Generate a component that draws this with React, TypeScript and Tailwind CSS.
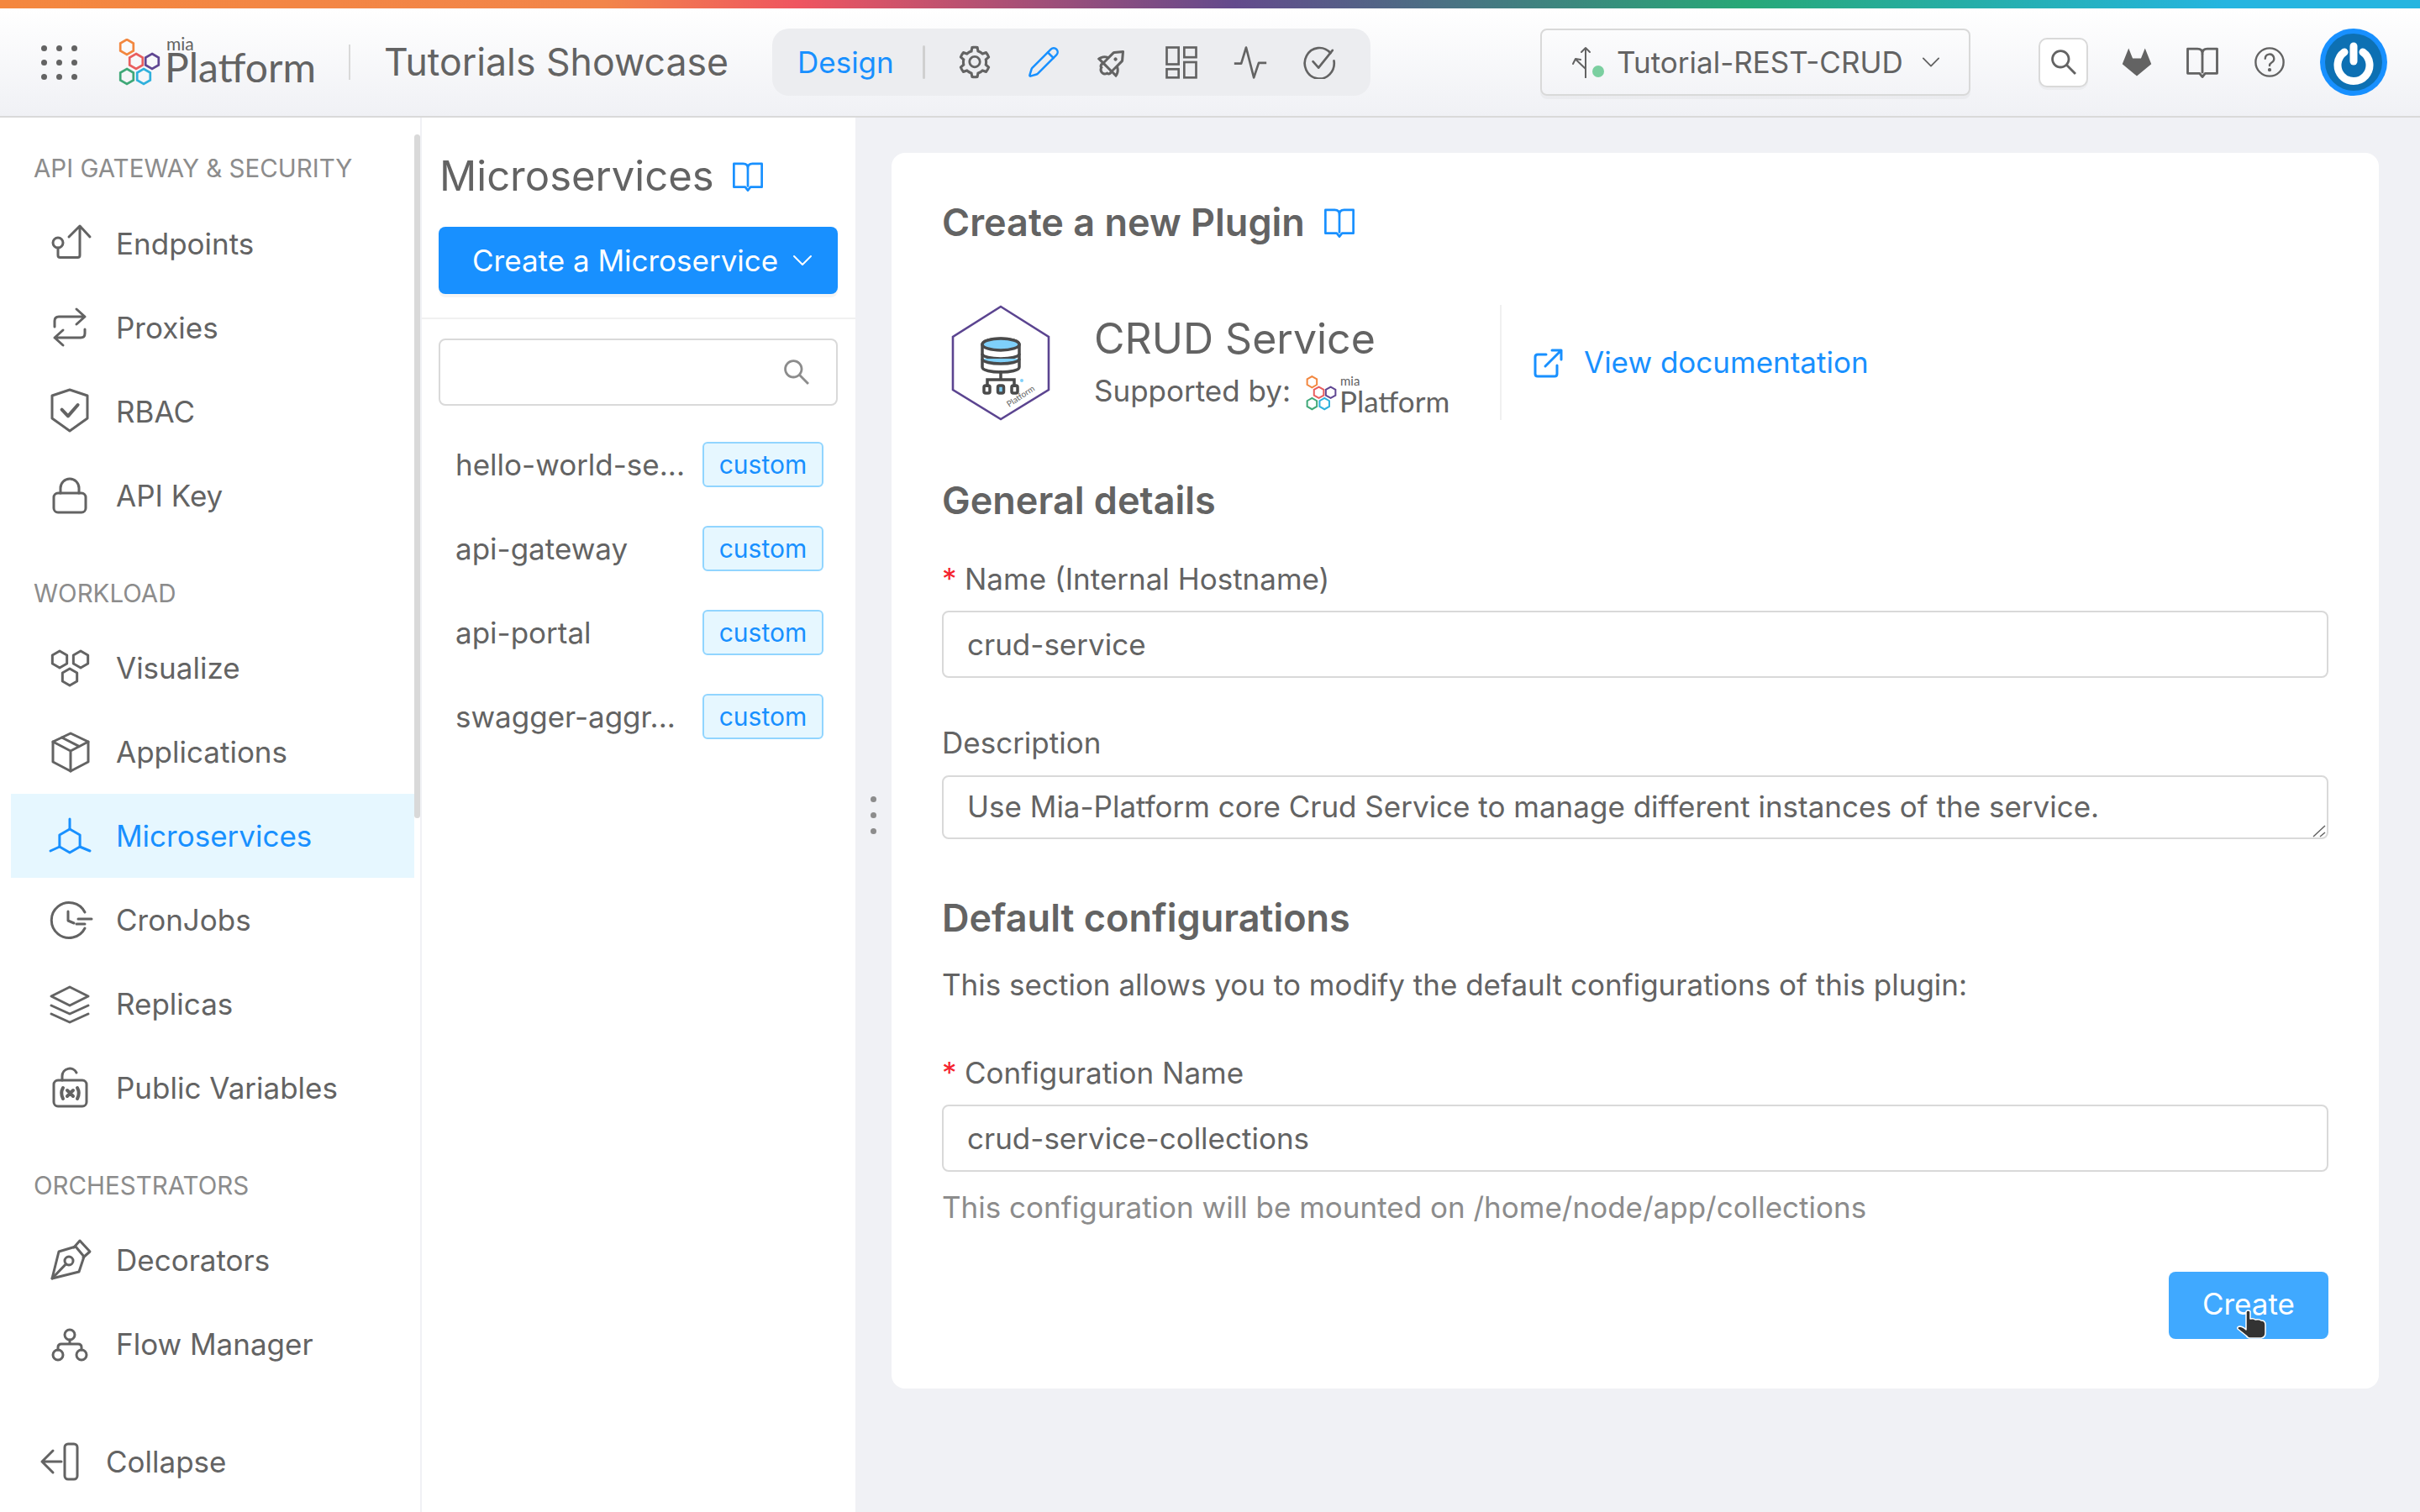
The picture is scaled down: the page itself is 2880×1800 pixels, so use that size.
import React from 'react';
import { Pencil } from 'lucide-react';
import { AiOutlineRocket, AiOutlineSearch, AiOutlineSetting } from 'react-icons/ai';

type IconProps = { className?: string };

const hex = (cx: number, cy: number, r: number) => {
    const w = r * 0.866;
    return `M${cx} ${cy - r}L${cx + w} ${cy - r / 2}V${cy + r / 2}L${cx} ${cy + r}L${cx - w} ${cy + r / 2}V${cy - r / 2}Z`;
};

const Line = ({ className, children }: IconProps & { children: React.ReactNode }) => (
    <svg
        viewBox="0 0 24 24"
        fill="none"
        stroke="currentColor"
        strokeWidth={1.5}
        strokeLinecap="round"
        strokeLinejoin="round"
        className={className ?? 'w-12 h-12'}
        overflow="visible"
    >
        {children}
    </svg>
);

const Chevron = ({ className }: IconProps) => (
    <svg viewBox="0 0 24 16" fill="none" stroke="currentColor" strokeWidth={2} strokeLinecap="round" strokeLinejoin="round" className={className}>
        <path d="M2 3L12 13L22 3" />
    </svg>
);

const EndpointsIcon = () => (
    <Line>
        <circle cx="4.5" cy="11.5" r="3" />
        <path d="M4.5 14.5v4.5q0 1.3 1.3 1.3h10.4q1.3 0 1.3-1.3V1.5M11 8l6.5-6.5L23.5 8" />
    </Line>
);
const ProxiesIcon = () => (
    <Line>
        <path d="M2.5 11.5V8q0-2.500 2.500-2.500h15.500M15.500 1l5 4.500-5 4.500" />
        <path d="M20.500 13v2.500q0 2.500-2.500 2.500H2.500M7.500 13.500l-5 4.500 5 4.500" />
    </Line>
);
const RbacIcon = () => (
    <Line>
        <path d="M11.500-1L22 2.500V16L11.500 23.500L1 16V2.500Z" />
        <path d="M6.800 10.800l3.700 3.900 5.800-6.700" strokeWidth={2} />
    </Line>
);
const LockIcon = () => (
    <Line>
        <rect x="2" y="10.500" width="19" height="11.500" rx="2.500" />
        <path d="M6 10.500V7.500a5.500 5.500 0 0 1 11 0v3" />
    </Line>
);
const VisualizeIcon = () => (
    <Line>
        <path d={hex(5.5, 7, 5)} />
        <path d={hex(18, 7, 5)} />
        <path d={hex(11.5, 17.5, 5)} />
    </Line>
);
const BoxIcon = () => (
    <Line>
        <path d="M12 1L22.500 6V18L12 23.500L1.500 18V6Z" />
        <path d="M1.500 6L12 11.500L22.500 6M12 11.500V23.500M6.800 3.500L17.200 8.800" />
    </Line>
);
const MicroIcon = () => (
    <Line>
        <path d={hex(11.5, 15, 7)} />
        <path d="M11.500 2V8M0 21L5.500 18.500M23.500 21L17.500 18.500" />
    </Line>
);
const CronIcon = () => (
    <Line>
        <path d="M20.500 7.500A10.500 10.500 0 1 0 20.500 17" />
        <path d="M10.500 7v5.500l3.500 1.500M16.500 11.500h8M15.500 14.500h5" />
    </Line>
);
const ReplicasIcon = () => (
    <Line>
        <path d="M11.500 2L22.500 7.500L11.500 13L0.500 7.500Z" />
        <path d="M0.500 13L11.500 18L22.500 13M0.500 18L11.500 23L22.500 18" />
    </Line>
);
const VariablesIcon = () => (
    <Line>
        <rect x="2" y="7.500" width="19.500" height="15.500" rx="2.500" />
        <path d="M7 7.500V5a4.500 4.500 0 0 1 8.500-2" />
        <path d="M7.500 12q-1.800 3.200 0 6.500M16 12q1.800 3.200 0 6.500M10 13.500l3.500 3.500m0-3.500l-3.500 3.500" strokeWidth={2} />
    </Line>
);
const PenIcon = () => (
    <Line>
        <path d="M1 23L5 7L15 4L20 10L17 19Z" />
        <path d="M14 4.500L17.500 0.500L23.500 7L19.500 10.500" />
        <circle cx="11" cy="12.500" r="2.500" />
        <path d="M1 23L9.300 14.300" />
    </Line>
);
const FlowIcon = () => (
    <Line>
        <circle cx="11.500" cy="6.500" r="3" />
        <circle cx="4.500" cy="18.500" r="3" />
        <circle cx="18.500" cy="18.500" r="3" />
        <path d="M11.500 9.500V12M4.500 15.500V14q0-2 2-2h10q2 0 2 2v1.500" />
    </Line>
);
const CollapseIcon = () => (
    <Line>
        <rect x="14.500" y="1.500" width="7.500" height="21" rx="2" />
        <path d="M12.500 12H1M7.500 5.500L1 12L7.500 18.500" />
    </Line>
);
const BookIcon = ({ className }: IconProps) => (
    <svg viewBox="0 0 24 24" fill="none" stroke="currentColor" strokeWidth={1.700} strokeLinejoin="round" className={className}>
        <path d="M1.500 2.500H8.500Q12 2.500 12 6Q12 2.500 15.500 2.500H22.500V20H14L12 22.500L10 20H1.500Z" />
        <path d="M12 6V20" />
    </svg>
);
const TilesIcon = () => (
    <svg viewBox="0 0 24 24" fill="none" stroke="currentColor" strokeWidth={1.600} className="w-[40px] h-[40px]">
        <rect x="1.500" y="1.500" width="8.500" height="12" />
        <rect x="14" y="1.500" width="8.500" height="7" />
        <rect x="1.500" y="17" width="8.500" height="6" />
        <rect x="14" y="12" width="8.500" height="11" />
    </svg>
);
const PulseIcon = () => (
    <svg viewBox="0 0 24 24" fill="none" stroke="currentColor" strokeWidth={1.600} strokeLinejoin="round" className="w-[40px] h-[40px]">
        <path d="M0.500 13H5.500L9 1.500L14.500 23L18 12.500H23.500" />
    </svg>
);
const CheckCircleIcon = () => (
    <svg viewBox="0 0 24 24" fill="none" stroke="currentColor" strokeWidth={1.600} strokeLinecap="round" strokeLinejoin="round" className="w-[40px] h-[40px]">
        <path d="M20 5.500A10.500 11 0 1 0 22.500 11" />
        <path d="M7.500 11.500l4 4.500 10-12.500" />
    </svg>
);
const BranchIcon = () => (
    <svg viewBox="0 0 30 40" fill="none" stroke="#636363" strokeWidth={2} strokeLinecap="round" strokeLinejoin="round" className="w-[30px] h-[40px]">
        <path d="M18 38V3M13 8l5-5 5 5" />
        <path d="M18 38V28L6.500 17M3 22l3-6 6 1" />
    </svg>
);
const HelpIcon = () => (
    <svg viewBox="0 0 24 24" fill="none" stroke="#636363" strokeWidth={1.500} strokeLinecap="round" className="w-[38px] h-[38px]">
        <circle cx="12" cy="12" r="10.500" />
        <path d="M8.700 9.300a3.300 3.300 0 1 1 4.800 3c-1 .6-1.500 1.200-1.500 2.300" />
        <circle cx="12" cy="17.800" r=".6" fill="#636363" />
    </svg>
);
const GitlabIcon = () => (
    <svg viewBox="0 0 24 24" fill="#636363" className="w-[36px] h-[36px]">
        <path d="M5.500 1L8.700 9H15.300L18.500 1L23.500 13.500L12 23L0.500 13.500Z" />
    </svg>
);
const ExternalIcon = () => (
    <svg viewBox="0 0 36 36" fill="none" stroke="currentColor" strokeWidth={3} strokeLinecap="round" strokeLinejoin="round" className="w-[36px] h-[36px]">
        <path d="M28 21V31Q28 34 25 34H5Q2 34 2 31V11Q2 8 5 8H15" />
        <path d="M14 22L33 3M22 3H33V14" />
    </svg>
);
const HandCursor = ({ className }: IconProps) => (
    <svg viewBox="0 0 36 36" fill="#333333" stroke="#ffffff" strokeWidth={1.500} strokeLinejoin="round" className={className}>
        <path d="M11 3Q11 1 13.500 1Q16 1 16 3V11Q20 10 22 12Q27 11 29 13Q34 13 34 18V28Q34 33 29 34H16Q13 34 11 31L1 23Q0 21 3 20Q7 20 11 24Z" />
    </svg>
);

const Avatar = () => (
    <svg viewBox="0 0 80 80" className="w-20 h-20">
        <circle cx="40" cy="40" r="40" fill="#1890ff" />
        <circle cx="40" cy="40" r="34" fill="#0d70b3" />
        <path d="M29 28A19 19 0 1 0 51 28" fill="none" stroke="#ffffff" strokeWidth="9" strokeLinecap="round" />
        <path d="M40 21V39" stroke="#ffffff" strokeWidth="9" strokeLinecap="round" />
    </svg>
);

const LogoHexes = ({ className }: IconProps) => (
    <svg viewBox="0 0 50 56" fill="none" strokeWidth={2.700} className={className}>
        <path d={hex(10, 10, 9)} stroke="#f2873f" />
        <path d={hex(21, 27, 9)} stroke="#e95e5e" />
        <path d={hex(40, 27, 9)} stroke="#5f4692" />
        <path d={hex(10, 45, 9)} stroke="#3fa878" />
        <path d={hex(30, 45, 9)} stroke="#2fb0dc" />
    </svg>
);

const Logo = ({ big }: { big?: boolean }) =>
    big ? (
        <div className="flex items-end w-[235px] h-[56px]">
            <LogoHexes className="w-[50px] h-[56px] shrink-0" />
            <div className="relative ml-[5px] h-[56px]">
                <span className="absolute left-[2px] top-[-3px] text-[21px] leading-[17px] font-[Lato,sans-serif] text-[#636363]">mia</span>
                <span className="absolute left-0 top-[14px] text-[48px] leading-[39px] font-[Lato,sans-serif] text-[#636363]">Platform</span>
            </div>
        </div>
    ) : (
        <div className="flex items-end w-[170px] h-[46px]">
            <LogoHexes className="w-[37px] h-[42px] shrink-0" />
            <div className="relative ml-[3px] h-[46px]">
                <span className="absolute left-[1px] top-[3px] text-[15px] leading-[15px] font-[Lato,sans-serif] text-[#636363]">mia</span>
                <span className="absolute left-0 top-[18px] text-[35px] leading-[32px] font-[Lato,sans-serif] text-[#636363]">Platform</span>
            </div>
        </div>
    );

const CrudIcon = () => (
    <svg viewBox="0 0 120 138" fill="none" className="w-[120px] h-[138px] ml-[10px] shrink-0">
        <path d="M60 2L117 38V101L60 136L3 101V38Z" stroke="#5b4490" strokeWidth="2.600" />
        <g stroke="#4a4a4a" strokeWidth="3.500">
            <path d="M38 47c0-9 44-9 44 0v27c0 8-44 8-44 0Z" fill="#ffffff" />
            <ellipse cx="60" cy="47" rx="22" ry="7" fill="#7fd0fa" />
            <path d="M38 58c0 8 44 8 44 0" />
            <path d="M38 64c0 8 44 8 44 0" fill="#7fd0fa" />
            <path d="M60 78V89M44 98V89H76V98" />
            <rect x="40" y="96" width="7" height="9" rx="2" />
            <rect x="56.500" y="96" width="7" height="9" rx="2" fill="#7fd0fa" />
            <rect x="73" y="96" width="7" height="9" rx="2" />
        </g>
        <circle cx="85" cy="90" r="2" fill="#7fd0fa" />
        <g transform="translate(70 122) rotate(-34)">
            <text x="0" y="0" fontSize="10" fontFamily="Lato, sans-serif" fill="#636363">Platform</text>
        </g>
    </svg>
);

const NavItem = ({ icon, label, active }: { icon: React.ReactNode; label: string; active?: boolean }) => (
    <div className={`h-[100px] ml-[13px] pl-[47px] flex items-center ${active ? 'bg-[#e6f7ff] text-[#1890ff]' : 'text-[#636363]'}`}>
        <span className="w-[78px] shrink-0">{icon}</span>
        <span>{label}</span>
    </div>
);

const GroupLabel = ({ children, className }: { children: React.ReactNode; className: string }) => (
    <div className={`h-[40px] pl-[40px] text-[29.500px] leading-[40px] text-[#8c8c8c] ${className}`}>{children}</div>
);

const Sidebar = () => (
    <aside className="w-[502px] shrink-0 h-full bg-white border-r-2 border-[#f0f1f5] flex relative text-[35px]">
        <div className="w-[493px] h-full flex flex-col">
            <GroupLabel className="mt-[40px] mb-[20px]">API GATEWAY &amp; SECURITY</GroupLabel>
            <NavItem icon={<EndpointsIcon />} label="Endpoints" />
            <NavItem icon={<ProxiesIcon />} label="Proxies" />
            <NavItem icon={<RbacIcon />} label="RBAC" />
            <NavItem icon={<LockIcon />} label="API Key" />
            <GroupLabel className="mt-[46px] mb-[19px]">WORKLOAD</GroupLabel>
            <NavItem icon={<VisualizeIcon />} label="Visualize" />
            <NavItem icon={<BoxIcon />} label="Applications" />
            <NavItem icon={<MicroIcon />} label="Microservices" active />
            <NavItem icon={<CronIcon />} label="CronJobs" />
            <NavItem icon={<ReplicasIcon />} label="Replicas" />
            <NavItem icon={<VariablesIcon />} label="Public Variables" />
            <GroupLabel className="mt-[46px] mb-[19px]">ORCHESTRATORS</GroupLabel>
            <NavItem icon={<PenIcon />} label="Decorators" />
            <NavItem icon={<FlowIcon />} label="Flow Manager" />
            <div className="mt-[40px] h-[100px] pl-[48px] flex items-center text-[#636363]">
                <span className="w-[78px] shrink-0"><CollapseIcon /></span>
                <span>Collapse</span>
            </div>
        </div>
        <div className="absolute left-[493px] top-[20px] w-[7px] h-[814px] rounded-full bg-[#d9d9d9]" />
    </aside>
);

const services = ['hello-world-se...', 'api-gateway', 'api-portal', 'swagger-aggr...'];

const ServiceList = () => (
    <section className="w-[516px] shrink-0 h-full bg-white flex flex-col text-[35px] text-[#636363]">
        <div className="h-[80px] mt-[30px] px-[21px] flex items-center gap-[21px]">
            <span className="text-[49px] leading-[80px]">Microservices</span>
            <BookIcon className="w-[38px] h-[38px] text-[#1890ff]" />
        </div>
        <button className="mt-[20px] mx-[20px] w-[475px] h-[80px] rounded-[8px] bg-[#1890ff] text-white flex items-center pl-[40px] gap-[17px] shadow-[0_4px_0_rgba(0,0,0,0.04)]">
            Create a Microservice
            <Chevron className="w-[24px] h-[16px]" />
        </button>
        <div className="mt-[28px] h-[2px] bg-[#f0f0f0]" />
        <div className="mt-[23px] mx-[20px] w-[475px] h-[80px] rounded-[8px] border-2 border-[#d9d9d9] flex items-center justify-end pr-[28px]">
            <AiOutlineSearch size={38} className="text-[#8c8c8c]" />
        </div>
        <div className="mt-[20px]">
            {services.map((s) => (
                <div key={s} className="h-[100px] pl-[40px] pr-[38px] flex items-center justify-between">
                    <span>{s}</span>
                    <span className="w-[144px] h-[54px] rounded-[6px] border-2 border-[#91d5ff] bg-[#e6f7ff] text-[#1890ff] text-[30px] leading-[50px] text-center">custom</span>
                </div>
            ))}
        </div>
    </section>
);

const Field = ({ label, value, required }: { label: string; value: string; required?: boolean }) => (
    <>
        <div className="h-[40px] leading-[40px] flex">
            {required && <span className="w-[27px] text-[#f5222d]">*</span>}
            <span>{label}</span>
        </div>
        <input
            readOnly
            value={value}
            className="mt-[18px] h-[80px] w-full rounded-[8px] border-2 border-[#d9d9d9] px-[28px] text-[#636363] outline-none"
        />
    </>
);

const PluginForm = () => (
    <div className="w-[1770px] h-[1471px] mt-[42px] bg-white rounded-[16px] px-[60px] flex flex-col text-[35px] text-[#636363]">
        <div className="mt-[53px] h-[60px] flex items-center gap-[22px]">
            <h2 className="text-[45px] font-semibold">Create a new Plugin</h2>
            <BookIcon className="w-[38px] h-[38px] text-[#1890ff]" />
        </div>
        <div className="mt-[68px] h-[137px] flex items-center">
            <CrudIcon />
            <div className="ml-[51px] w-[483px] h-full flex flex-col justify-center">
                <div className="text-[50px] leading-[64px]">CRUD Service</div>
                <div className="mt-[4px] flex items-center gap-[18px]">
                    <span>Supported by:</span>
                    <Logo />
                </div>
            </div>
            <div className="w-[2px] h-full bg-[#f0f0f0]" />
            <div className="ml-[38px] flex items-center gap-[24px] text-[#1890ff]">
                <ExternalIcon />
                <span>View documentation</span>
            </div>
        </div>
        <h3 className="mt-[66px] h-[60px] leading-[60px] text-[45px] font-semibold">General details</h3>
        <div className="mt-[43px]">
            <Field required label="Name (Internal Hostname)" value="crud-service" />
        </div>
        <div className="mt-[57px] h-[40px] leading-[40px]">Description</div>
        <div className="relative mt-[19px] h-[76px]">
            <textarea
                readOnly
                value="Use Mia-Platform core Crud Service to manage different instances of the service."
                className="h-full w-full resize-none rounded-[8px] border-2 border-[#d9d9d9] px-[28px] py-[12px] leading-[46px] text-[#636363] outline-none overflow-hidden"
            />
            <svg viewBox="0 0 16 16" fill="none" stroke="#636363" strokeWidth={1.500} className="absolute right-[3px] bottom-[2px] w-[16px] h-[16px]">
                <path d="M1 15L15 2M9 15L15 10" />
            </svg>
        </div>
        <h3 className="mt-[64px] h-[60px] leading-[60px] text-[45px] font-semibold">Default configurations</h3>
        <p className="mt-[29px] h-[40px] leading-[40px]">This section allows you to modify the default configurations of this plugin:</p>
        <div className="mt-[65px]">
            <Field required label="Configuration Name" value="crud-service-collections" />
        </div>
        <p className="mt-[22px] h-[40px] leading-[40px] text-[#8c8c8c]">This configuration will be mounted on /home/node/app/collections</p>
        <button className="relative mt-[57px] self-end w-[190px] h-[80px] pb-[4px] rounded-[8px] bg-[#40a9ff] text-white">
            Create
            <HandCursor className="absolute left-[81px] top-[45px] w-[36px] h-[36px]" />
        </button>
    </div>
);

const Header = () => (
    <header className="h-[140px] shrink-0 flex flex-col border-b-2 border-[#d9d9d9]">
        <div className="h-[10px] bg-[linear-gradient(90deg,#f4873f_0%,#f2854a_25%,#ef5560_33%,#634a8c_51%,#27a877_72%,#25b5e0_92%,#25b5e0_100%)]" />
        <div className="flex-1 flex items-center bg-[linear-gradient(180deg,#ffffff_0%,#f0f1f5_100%)] text-[#636363]">
            <div className="ml-[49px] grid grid-cols-3 gap-x-[11px] gap-y-[10px]">
                {Array.from({ length: 9 }).map((_, i) => (
                    <span key={i} className="w-[7px] h-[7px] rounded-full bg-[#636363]" />
                ))}
            </div>
            <div className="ml-[49px]"><Logo big /></div>
            <div className="ml-[39px] w-[2px] h-[42px] bg-[#d9d9d9]" />
            <div className="ml-[40px] text-[44.600px] leading-[60px] w-[410px] whitespace-nowrap">Tutorials Showcase</div>
            <div className="ml-[52px] w-[712px] h-[80px] rounded-[20px] bg-[#ecedf0] flex items-center">
                <span className="ml-[30px] text-[35px] text-[#1890ff] w-[113px]">Design</span>
                <span className="ml-[36px] w-[3px] h-[40px] rounded bg-[#d0d0d0]" />
                <div className="ml-[39px] flex items-center gap-[42px]">
                    <AiOutlineSetting size={44} className="-m-[2px]" />
                    <Pencil size={40} strokeWidth={1.500} className="text-[#1890ff]" />
                    <AiOutlineRocket size={46} className="-m-[3px] rotate-45" />
                    <TilesIcon />
                    <PulseIcon />
                    <CheckCircleIcon />
                </div>
            </div>
            <div className="ml-[202px] w-[512px] h-[80px] rounded-[8px] border-2 border-[#d9d9d9] shadow-[0_4px_0_rgba(0,0,0,0.03)] flex items-center">
                <span className="relative ml-[34px] w-[44px] h-[40px] shrink-0">
                    <BranchIcon />
                    <span className="absolute left-[26px] top-[24px] w-[14px] h-[14px] rounded-full bg-[#7bcfa0]" />
                </span>
                <span className="ml-[11px] text-[35px]">Tutorial-REST-CRUD</span>
                <Chevron className="ml-[22px] w-[22px] h-[24px]" />
            </div>
            <div className="ml-[81px] w-[59px] h-[59px] rounded-[10px] bg-white border-2 border-[#d9d9d9] shadow-[0_3px_0_rgba(0,0,0,0.03)] flex items-center justify-center">
                <AiOutlineSearch size={38} />
            </div>
            <span className="ml-[40px]"><GitlabIcon /></span>
            <BookIcon className="ml-[40px] w-[40px] h-[40px] text-[#636363]" />
            <span className="ml-[41px]"><HelpIcon /></span>
            <span className="ml-[41px]"><Avatar /></span>
        </div>
    </header>
);

export default function App() {
    return (
        <div className="w-[2880px] h-[1800px] flex flex-col overflow-hidden bg-[#f0f1f5] font-[Inter,sans-serif]">
            <Header />
            <div className="flex-1 min-h-0 flex">
                <Sidebar />
                <ServiceList />
                <div className="w-[43px] h-full shrink-0 flex flex-col items-center justify-center gap-[12px]">
                    <span className="w-[7px] h-[7px] rounded-full bg-[#8c8c8c]" />
                    <span className="w-[7px] h-[7px] rounded-full bg-[#8c8c8c]" />
                    <span className="w-[7px] h-[7px] rounded-full bg-[#8c8c8c]" />
                </div>
                <PluginForm />
            </div>
        </div>
    );
}
